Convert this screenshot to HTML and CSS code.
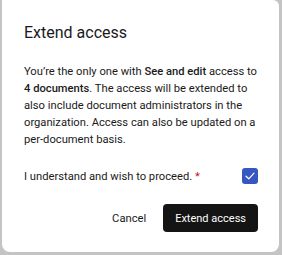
FILE: index.html
```html
<!DOCTYPE html>
<html lang="en">
<head>
    <meta charset="utf-8" />
    <meta name="viewport" content="width=device-width, initial-scale=1" />
    <title>Extend access</title>
    <link rel="stylesheet" href="styles.css">
</head>
<body>

<div class="overlay">
    <div class="dialog" role="dialog" aria-labelledby="dialog-title">
        <h1 id="dialog-title" class="dialog-title">Extend access</h1>
        <p class="dialog-text">
            You’re the only one with <b>See and edit</b> access to
            <b>4 documents</b>. The access will be extended to also include
            document administrators in the organization. Access can also be
            updated on a per-document basis.
        </p>
        <label class="confirm-row">
            <span>I understand and wish to proceed. <span class="required">*</span></span>
            <span class="checkbox">
                <svg width="10" height="8" viewBox="0 0 10 8">
                    <path d="M1 4.2 L3.8 6.8 L9 1.2" fill="none" stroke="#fff" stroke-width="1.2" stroke-linecap="round" stroke-linejoin="round" />
                </svg>
            </span>
        </label>
        <div class="dialog-actions">
            <button class="btn btn-plain">Cancel</button>
            <button class="btn btn-primary">Extend access</button>
        </div>
    </div>
</div>

</body>
</html>
```

FILE: styles.css
```css
* {
    margin: 0;
    padding: 0;
    box-sizing: border-box;
}

html, body {
    width: 100%;
    height: 100%;
}

body {
    overflow: hidden;
    background-color: #c4c4c4;
    font-family: Roboto, "Liberation Sans", sans-serif;
    color: #1a1a1a;
}

.overlay {
    padding: 0 3px 3px 2px;
    height: 100%;
}

.dialog {
    background-color: white;
    border-radius: 0 6px 8px 8px;
    height: 100%;
    padding: 22px 21px 0 22px;
}

.dialog-title {
    font-size: 16px;
    font-weight: 400;
    line-height: 22px;
    margin-bottom: 19px;
}

.dialog-text {
    font-size: 11.2px;
    line-height: 17px;
}

.dialog-text b {
    font-weight: 500;
}

.confirm-row {
    display: flex;
    justify-content: space-between;
    align-items: center;
    margin-top: 20px;
    font-size: 11.2px;
}

.required {
    color: #c8102e;
}

.checkbox {
    width: 16px;
    height: 16px;
    border-radius: 3px;
    background-color: #3657c2;
    display: flex;
    align-items: center;
    justify-content: center;
}

.dialog-actions {
    display: flex;
    justify-content: flex-end;
    align-items: center;
    gap: 17px;
    margin-top: 20px;
}

.btn {
    font-family: inherit;
    font-size: 11px;
    border: none;
    border-radius: 4px;
    height: 28px;
    padding: 0 12px;
    cursor: pointer;
}

.btn-plain {
    background: none;
    padding: 0;
    font-size: 11.2px;
    color: #1a1a1a;
}

.btn-primary {
    background-color: #141414;
    color: white;
}
```
